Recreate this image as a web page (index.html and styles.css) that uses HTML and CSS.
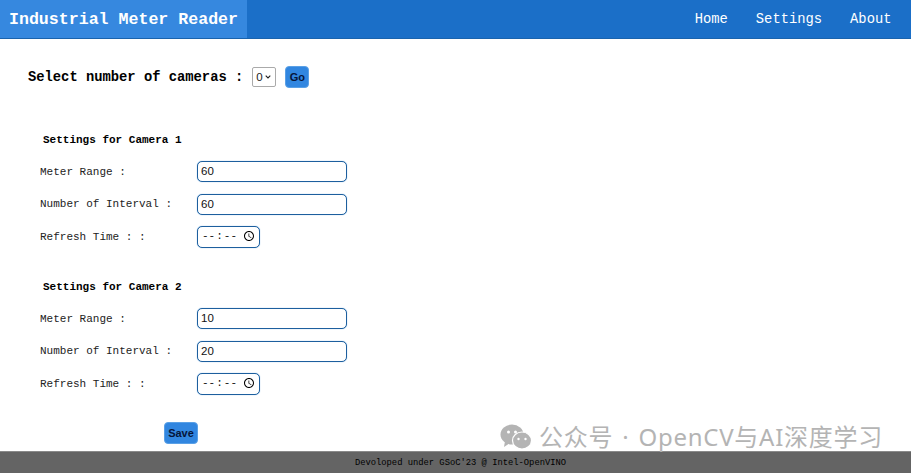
FILE: index.html
```html
<!DOCTYPE html>
<html lang="en">
<head>
  <meta charset="UTF-8">
  <meta name="viewport" content="width=device-width, initial-scale=1.0">
  <title>Industrial Meter Reader</title>
  <link rel="stylesheet" href="styles.css">
</head>
<body>

<header>
  <a class="brand" href="#">Industrial Meter Reader</a>
  <nav>
    <a href="#">Home</a>
    <a href="#">Settings</a>
    <a href="#">About</a>
  </nav>
</header>

<main>
  <div class="camera-count">
    <label for="count">Select number of cameras :</label>
    <select id="count"><option>0</option></select>
    <button class="btn">Go</button>
  </div>

  <section class="camera">
    <h3>Settings for Camera 1</h3>
    <div class="row"><label>Meter Range :</label><input type="text" value="60"></div>
    <div class="row"><label>Number of Interval :</label><input type="text" value="60"></div>
    <div class="row"><label>Refresh Time : :</label><input type="time"></div>
  </section>

  <section class="camera">
    <h3>Settings for Camera 2</h3>
    <div class="row"><label>Meter Range :</label><input type="text" value="10"></div>
    <div class="row"><label>Number of Interval :</label><input type="text" value="20"></div>
    <div class="row"><label>Refresh Time : :</label><input type="time"></div>
  </section>

  <button class="btn save">Save</button>
</main>

<footer>Devoloped under GSoC'23 @ Intel-OpenVINO</footer>

<div class="watermark">
  <svg width="32" height="26" viewBox="0 0 32 26">
    <ellipse cx="12" cy="10.5" rx="11.5" ry="10" fill="#b4b4b4"/>
    <path d="M5 17l-1 6 6-4z" fill="#b4b4b4"/>
    <ellipse cx="22" cy="16.5" rx="9.5" ry="8.5" fill="#b4b4b4" stroke="#fff" stroke-width="1.2"/>
    <circle cx="8.5" cy="8" r="1.5" fill="#fff"/>
    <circle cx="15.5" cy="8" r="1.5" fill="#fff"/>
    <circle cx="18.5" cy="15" r="1.2" fill="#fff"/>
    <circle cx="25.5" cy="15" r="1.2" fill="#fff"/>
  </svg>
  <span>公众号 · OpenCV与AI深度学习</span>
</div>

</body>
</html>
```

FILE: styles.css
```css
* {
  box-sizing: border-box;
}

html, body {
  height: 100%;
}

body {
  margin: 0;
  display: flex;
  flex-direction: column;
  background: #fff;
  color: #000;
  font-family: "Liberation Mono", monospace;
  position: relative;
  overflow: hidden;
}

header {
  height: 39px;
  flex: none;
  display: flex;
  justify-content: space-between;
  background-color: #1b6fc8;
  border-bottom: 1px solid #1a63ad;
}

.brand {
  display: flex;
  align-items: center;
  padding: 0 9px;
  width: 247px;
  background-color: #3688df;
  color: #fff;
  font-size: 16.6px;
  font-weight: bold;
  text-decoration: none;
  white-space: nowrap;
}

nav {
  display: flex;
  align-items: center;
  gap: 28px;
  padding-right: 19.5px;
}

nav a {
  color: #fff;
  font-size: 13.8px;
  text-decoration: none;
}

main {
  flex: 1;
  padding: 27px 0 0 40px;
}

.camera-count {
  display: flex;
  align-items: center;
  margin-left: -12px;
  height: 22px;
}

.camera-count label {
  font-size: 13.8px;
  font-weight: bold;
  margin-right: 9px;
}

.camera-count select {
  appearance: none;
  width: 24px;
  height: 20px;
  padding: 0 0 0 3px;
  margin-right: 9px;
  font-family: "Liberation Sans", sans-serif;
  font-size: 11.5px;
  color: #222;
  background: #fff url("data:image/svg+xml,%3Csvg xmlns='http://www.w3.org/2000/svg' width='6' height='4'%3E%3Cpath d='M.7.7l2.3 2.3L5.3.7' fill='none' stroke='%23222' stroke-width='1.1'/%3E%3C/svg%3E") no-repeat right 4px center;
  border: 1px solid #aaa;
  border-radius: 2px;
}

.btn {
  background-color: #3186e0;
  color: #06153a;
  font-family: "Liberation Sans", sans-serif;
  font-size: 11px;
  font-weight: bold;
  border: 1px solid #5aa0e6;
  border-radius: 4px;
  padding: 0;
  width: 24px;
  height: 22px;
}

.camera {
  margin-top: 45px;
}

.camera + .camera {
  margin-top: 33px;
}

.camera h3 {
  margin: 0 0 14px 3px;
  font-size: 11px;
  line-height: 14px;
  font-weight: bold;
}

.row {
  display: flex;
  align-items: center;
  height: 21px;
  margin-bottom: 11.5px;
}

.row label {
  width: 157px;
  font-size: 11px;
  color: #222;
}

.row input {
  height: 21px;
  width: 150px;
  padding: 0 3px 1px;
  font-family: "Liberation Sans", sans-serif;
  font-size: 11.5px;
  color: #111;
  background: #fff;
  border: 1px solid #1d5f9e;
  border-radius: 5px;
  box-shadow: 0 0 1px #6aa6de;
}

.row input[type="time"] {
  width: 63px;
  height: 22px;
  padding-right: 4px;
  font-family: "Liberation Mono", monospace;
  font-size: 11px;
}

.row input::-webkit-datetime-edit-ampm-field {
  display: none;
}

.row input::-webkit-calendar-picker-indicator {
  margin: 0;
  padding: 0;
  width: 12px;
  height: 12px;
}

.save {
  display: block;
  width: 34px;
  height: 22px;
  margin: 28px 0 0 124px;
}

footer {
  height: 22px;
  flex: none;
  display: flex;
  justify-content: center;
  align-items: center;
  padding-left: 10px;
  background-color: #646464;
  border-top: 1px solid #8a8a8a;
  color: #000;
  font-size: 8.8px;
}

.watermark {
  position: absolute;
  left: 500px;
  top: 423px;
  display: flex;
  align-items: center;
  gap: 7px;
  color: #b4b4b4;
  font-family: "Noto Sans", "Noto Sans CJK SC", sans-serif;
  font-size: 24px;
  letter-spacing: 0.75px;
  word-spacing: 2px;
  line-height: 28px;
  white-space: nowrap;
}
```
